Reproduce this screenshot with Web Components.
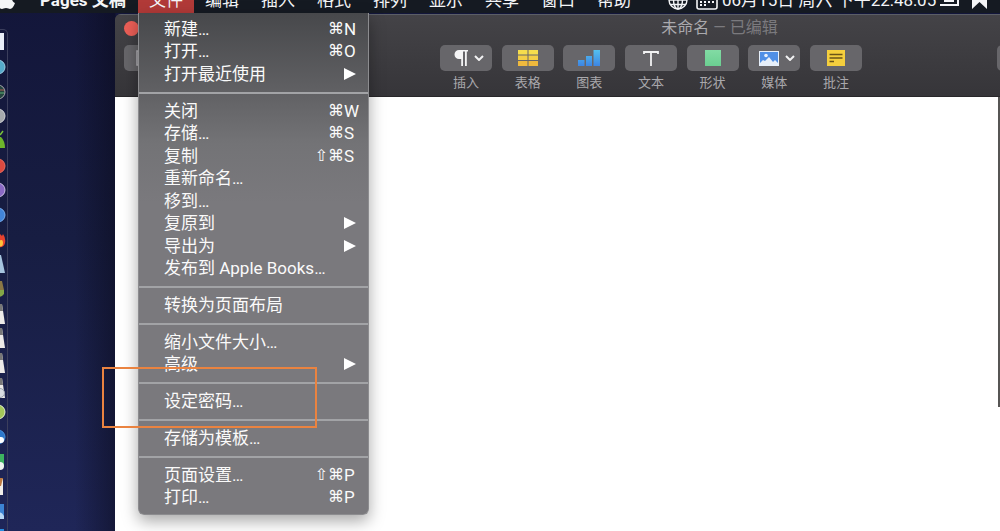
<!DOCTYPE html>
<html lang="zh-CN">
<head>
<meta charset="utf-8">
<title>Pages 文稿</title>
<style>
html, body { height: 100%; margin: 0; }
body { overflow: hidden; font-family: "Roboto", "Noto Sans CJK SC", sans-serif; font-size: 17px; line-height: 22px; }
</style>
</head>
<body>
<mac-desktop></mac-desktop>
<script>
const define = (name, html, setup) => customElements.define(name, class extends HTMLElement {
  constructor() {
    super();
    const t = document.createElement('template');
    t.innerHTML = html;
    this.attachShadow({ mode: 'open' }).append(t.content.cloneNode(true));
  }
  connectedCallback() { if (setup) setup(this, this.shadowRoot); }
});

/* ---------- menu bar ---------- */
define('mac-menubar', `
<style>
:host { display: flex; align-items: center; height: 26px; margin-top: -13px; background: #151a22; color: #f4f5f7; white-space: nowrap; box-sizing: border-box; }
nav, .status { display: flex; align-items: center; height: 100%; }
.logo { width: 18px; height: 18px; margin: 0 24px 0 -2px; flex: none; }
b { width: 98px; font-weight: 700; }
button { all: unset; box-sizing: border-box; height: 100%; padding: 0 11px; }
button[aria-expanded="true"] { background: #b13a38; }
.status { margin-left: auto; padding-right: 12px; }
.globe { width: 20px; height: 20px; margin-right: 8px; }
.cal { width: 22px; height: 20px; margin-right: 4px; }
time { width: 217px; }
.bat { width: 22px; height: 16px; margin-right: 10px; }
.mark { width: 17px; height: 18px; }
svg { flex: none; }
</style>
<nav>
<svg class="logo" viewBox="0 0 18 18" fill="#f4f5f7"><path d="M1 2h15c-1 1-2 3-2 5 0 3 1 4 3 5-1 3-3 6-5 6-1 0-2-1-4-1s-3 1-4 1C1 18-1 14-1 9z"/></svg>
<b>Pages 文稿</b>
<button aria-expanded="true">文件</button><button>编辑</button><button>插入</button><button>格式</button><button>排列</button><button>显示</button><button>共享</button><button>窗口</button><button>帮助</button>
</nav>
<div class="status">
<svg class="globe" viewBox="0 0 20 20" fill="none" stroke="#f4f5f7" stroke-width="1.4"><circle cx="10" cy="10" r="9"/><ellipse cx="10" cy="10" rx="4.5" ry="9"/><path d="M10 1v18M1 10h18M2.500 14.500h15"/></svg>
<svg class="cal" viewBox="0 0 22 20" fill="none" stroke="#f4f5f7" stroke-width="1.6"><rect x="1" y="1" width="20" height="18" rx="2"/><path d="M4 12h2M8 12h2M12 12h2M16 12h2M4 15h2M8 15h2" stroke-width="2"/></svg>
<time>06月15日 周六 下午22:48:05</time>
<svg class="bat" viewBox="0 0 22 16" fill="none" stroke="#f4f5f7" stroke-width="2"><path d="M1 13h18V5M5 9h10"/></svg>
<svg class="mark" viewBox="0 0 17 18" fill="#f4f5f7"><path d="M1 0h15v18l-7.500-7L1 18z"/></svg>
</div>`);

/* ---------- dock ---------- */
const white = '<path d="M-2 1h4l3 20h-7z" fill="#eceae8"/><path d="M-2 1h4l1 7h-5z" fill="#777"/>';
const ball = (fill, ring) => `<circle cx="-2" cy="11" r="7" fill="${fill}" stroke="${ring}"/>`;
const dockIcons = [
  '<path d="M-2 2h6v17h-6z" fill="#e9edf8"/>',
  ball('#55aacb', '#9bcbe0'),
  ball('#24443f', '#a9a5ad') + '<path d="M0 9h4" stroke="#b25d52"/><path d="M0 12h4" stroke="#5caf76"/>',
  ball('#a6a9ad', '#cfd1d4'),
  '<path d="M-2 7h3q4 4 4 11h-7z" fill="#6db52b"/><path d="M0 5l3-4" stroke="#79c23b" stroke-width="1.500"/>',
  ball('#dc4940', '#e76c5d'),
  ball('#8a69c4', '#c9bddf'),
  ball('#4284d8', '#78abea'),
  '<path d="M-1 4l3 3 1-2q3 4 2 9t-7 4z" fill="#e8422e"/><path d="M-1 12q4-3 4 2t-5 3z" fill="#ffc33b"/>',
  '<path d="M-2 2h3l4 18h-7z" fill="#a6c4de"/>',
  '<path d="M-2 3h4l2 9h-6z" fill="#8a7745"/><path d="M-2 12h6v4q-3 4-6 2z" fill="#84a747"/>',
  white, white, white,
  white + '<circle cx="0" cy="16" r="4.500" fill="#d9dde2" stroke="#9ba3ad"/>',
  ball('#a4c85a', '#e2edcd'),
  ball('#2c78cc', '#4a91db') + '<circle cx="1" cy="14" r="3" fill="#fff"/>',
  '<path d="M-2 3h6v13h-6z" fill="#3db360"/><circle cx="0" cy="15" r="4" fill="#eef5ef"/>',
  '<path d="M-2 4h5v16h-5z" fill="#f0eee9"/><path d="M-2 3h5l-2 8h-3z" fill="#bd7b42"/>',
  '<path d="M-2 4h6v15h-6z" fill="#3c83d2"/><path d="M-2 14q3-4 6 2v3h-6z" fill="#b7d7f4"/>',
  '<path d="M-2 4h6v15h-6z" fill="#278fe0"/>'
];
define('mac-dock', `
<style>
:host { display: block; width: 7px; border: 1px solid #3b3e5c; border-left: 0; border-radius: 0 5px 0 0; overflow: hidden; box-sizing: content-box; }
ul { list-style: none; margin: 0; padding: 0; }
li { height: 25px; }
li:nth-child(3n) { height: 24px; }
svg { display: block; width: 7px; height: 24px; }
</style><ul></ul>`, (el, root) => {
  root.querySelector('ul').innerHTML = dockIcons.map(i => `<li><svg viewBox="0 -1 7 24" aria-hidden="true">${i}</svg></li>`).join('');
});

/* ---------- toolbar button ---------- */
define('tool-button', `
<style>
:host { display: flex; flex-direction: column; align-items: center; width: 52px; flex: none; color: #a9a8ac; font-size: 13px; line-height: 20px; }
button { all: unset; box-sizing: border-box; display: flex; align-items: center; justify-content: center; gap: 6px; width: 52px; height: 26px; border-radius: 5px; background: #67666a; margin-bottom: 2px; }
.chev { display: none; width: 10px; height: 6px; }
:host([menu]) .chev { display: block; }
:host([menu]) button { padding-left: 6px; }
</style>
<button aria-labelledby="l"><slot></slot><svg class="chev" viewBox="0 0 10 6" fill="none" stroke="#f2f2f3" stroke-width="2"><path d="M1 1l4 4 4-4"/></svg></button>
<span id="l"></span>`, (el, root) => { root.querySelector('span').textContent = el.getAttribute('label') || ''; });

/* ---------- document window ---------- */
define('pages-window', `
<style>
:host { display: flex; flex-direction: column; background: #3a393d; border-radius: 6px 0 0 0; overflow: hidden; }
header { background: linear-gradient(#444347, #363539); border-top: 1px solid #5b5e66; border-bottom: 1px solid #28272a; box-sizing: border-box; height: 83px; }
.title { display: flex; align-items: center; height: 26px; }
.close { all: unset; width: 15px; height: 15px; border-radius: 50%; background: #ec5f57; margin-left: 9px; flex: none; }
h1 { flex: 1; margin: 0; padding-left: 300px; text-align: center; font-size: 16px; line-height: 26px; font-weight: 400; color: #aaa9ad; }
h1 span { color: #7b7a7e; }
.tools { display: flex; padding: 4px 0 0 9px; }
.group { display: flex; justify-content: space-between; width: 422px; flex: none; margin-left: 264px; }
.last { margin-left: auto; margin-right: -49px; }
main { flex: 1; display: flex; align-items: flex-start; justify-content: flex-end; background: #fff; }
.scroll { width: 2px; height: 310px; background: #565554; }
svg { display: block; }
</style>
<header>
<div class="title"><button class="close" aria-label="关闭窗口"></button><h1>未命名 <span>— 已编辑</span></h1></div>
<div class="tools">
<tool-button><svg width="28" height="16" viewBox="0 0 28 16" fill="none" stroke="#b5b4b8" stroke-width="1.500"><path d="M1 1h24v14H1zM8 1v14"/></svg></tool-button>
<div class="group">
<tool-button label="插入" menu><svg width="14" height="16" viewBox="0 0 14 16"><path d="M5 0h9v1.600h-1.200V16h-1.800V1.600H9V16H7.200V9H5a4.500 4.500 0 0 1 0-9z" fill="#f4f4f5"/></svg></tool-button>
<tool-button label="表格"><svg width="20" height="16" viewBox="0 0 20 16"><g fill="#f5dd4d"><path d="M0 0h9.500v4.500H0zM10.500 0H20v4.500h-9.500z"/></g><g fill="#f3cf46"><path d="M0 5.500h9.500v4.500H0zM10.500 5.500H20v4.500h-9.500z"/></g><g fill="#efb93d"><path d="M0 11h9.500v5H0zM10.500 11H20v5h-9.500z"/></g></svg></tool-button>
<tool-button label="图表"><svg width="22" height="16" viewBox="0 0 22 16"><defs><linearGradient id="g" x2="0" y2="1"><stop stop-color="#54c0ee"/><stop offset="1" stop-color="#3d85e4"/></linearGradient></defs><path d="M0 10h6.500v6H0zM8 6h6v10H8zM15.500 0H22v16h-6.500z" fill="url(#g)"/></svg></tool-button>
<tool-button label="文本"><svg width="16" height="15" viewBox="0 0 16 15" fill="none" stroke="#f2f2f3" stroke-width="1.800"><path d="M1 3V1h14v2M8 1v14"/></svg></tool-button>
<tool-button label="形状"><svg width="16" height="16" viewBox="0 0 16 16"><defs><linearGradient id="s" x2="0" y2="1"><stop stop-color="#82dba4"/><stop offset="1" stop-color="#6bcf91"/></linearGradient></defs><path d="M0 0h16v16H0z" fill="url(#s)"/></svg></tool-button>
<tool-button label="媒体" menu><svg width="20" height="15" viewBox="0 0 20 15"><path d="M0 0h20v15H0z" fill="#e6effa"/><path d="M1 1h18v11l-3-3-2 2-4-5-4 4-2-1-3 3z" fill="#4f8fe6"/><circle cx="7" cy="4.500" r="1.800" fill="#e6effa"/></svg></tool-button>
<tool-button label="批注"><svg width="18" height="16" viewBox="0 0 18 16"><path d="M0 0h18v16H0z" fill="#f5cf3d"/><path d="M2.500 4.500h13M2.500 8h13M2.500 11.500H7" stroke="#6b5418" stroke-width="1.300"/></svg></tool-button>
</div>
<tool-button class="last"></tool-button>
</div>
</header>
<main><div class="scroll"></div></main>`);

/* ---------- menu ---------- */
define('menu-item', `
<style>
:host { display: grid; grid-template-columns: 1fr auto 20px; align-items: center; height: 23px; padding: 0 4px 0 25px; white-space: nowrap; box-sizing: border-box; }
:host(:nth-of-type(even)) { height: 22px; }
button { all: unset; }
.mod { font-family: "DejaVu Sans", sans-serif; font-size: 16px; text-align: right; }
svg { display: none; width: 12px; height: 12px; }
:host([submenu]) svg { display: block; }
</style>
<button role="menuitem"><slot></slot></button><span class="mod"></span><span class="key"></span>`, (el, root) => {
  const keys = el.getAttribute('keys') || '';
  root.querySelector('.mod').textContent = keys.slice(0, -1);
  const key = root.querySelector('.key');
  if (el.hasAttribute('submenu')) key.innerHTML = '<svg viewBox="0 0 12 12" aria-hidden="true"><path d="M0 0l12 6-12 6z" fill="#fff"/></svg>';
  else key.textContent = keys.slice(-1);
});
define('file-menu', `
<style>
:host { display: block; box-sizing: border-box; width: 231px; padding: 4px 0 6px; color: #fafafa; border: 1px solid #8c8c8f; border-top: 0; border-radius: 0 0 6px 6px; background: linear-gradient(#47484b, #606063 77px, #737376 130px, #7a797d 190px, #7a797d); box-shadow: 0 6px 16px rgba(0,0,0,.35); }
hr { border: 0; height: 2px; margin: 7px 0 5px; background: #a2a3a6; }
section { display: block; }
</style>
<section><menu-item keys="⌘N">新建…</menu-item><menu-item keys="⌘O">打开…</menu-item><menu-item submenu>打开最近使用</menu-item></section>
<hr>
<section><menu-item keys="⌘W">关闭</menu-item><menu-item keys="⌘S">存储…</menu-item><menu-item keys="⇧⌘S">复制</menu-item><menu-item>重新命名…</menu-item><menu-item>移到…</menu-item><menu-item submenu>复原到</menu-item><menu-item submenu>导出为</menu-item><menu-item>发布到 Apple Books…</menu-item></section>
<hr>
<section><menu-item>转换为页面布局</menu-item></section>
<hr>
<section><menu-item>缩小文件大小…</menu-item><menu-item submenu>高级</menu-item></section>
<hr>
<section><menu-item>设定密码…</menu-item></section>
<hr>
<section><menu-item>存储为模板…</menu-item></section>
<hr>
<section><menu-item keys="⇧⌘P">页面设置…</menu-item><menu-item keys="⌘P">打印…</menu-item></section>`);

/* ---------- desktop: windows float freely over the wallpaper ---------- */
define('mac-desktop', `
<style>
:host { display: flow-root; position: relative; height: 100vh; overflow: hidden; background: linear-gradient(90deg, transparent 75px, rgba(10,10,26,.5) 115px, transparent 116px), linear-gradient(#13163a, #171d42 45%, #1f2658); }
mac-menubar { position: relative; }
mac-dock { position: absolute; left: 0; top: 29px; bottom: -8px; }
pages-window { position: absolute; left: 115px; top: 14px; right: 0; bottom: 0; }
file-menu { position: absolute; left: 138px; top: 13px; }
.highlight { position: absolute; left: 102px; top: 367px; width: 215px; height: 61px; box-sizing: border-box; border: 2px solid #ea8340; pointer-events: none; }
</style>
<mac-menubar></mac-menubar>
<mac-dock></mac-dock>
<pages-window></pages-window>
<file-menu></file-menu>
<div class="highlight"></div>`);
</script>
</body>
</html>
